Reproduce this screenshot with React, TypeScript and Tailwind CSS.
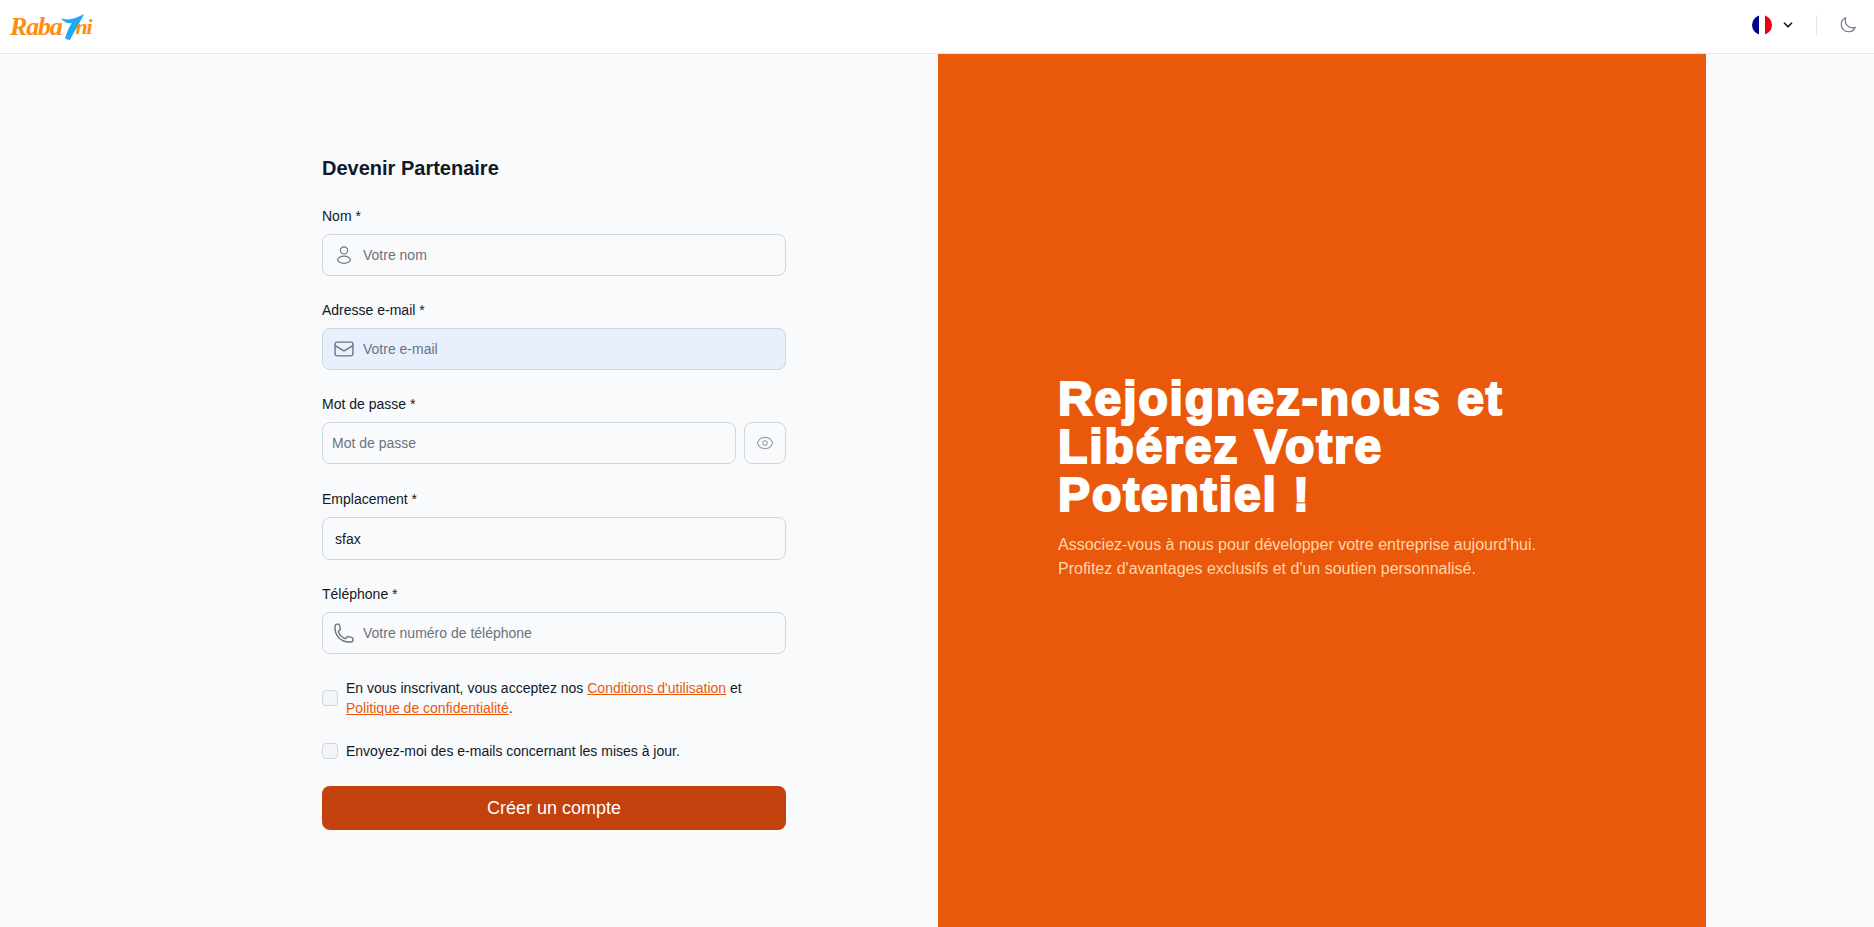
import { ChevronDown } from "lucide-react";
import { HiOutlineEnvelope, HiOutlineEye, HiOutlineMoon, HiOutlinePhone } from "react-icons/hi2";
import type { ReactNode } from "react";

const inputClass =
  "h-[42px] w-full rounded-lg border border-gray-300 bg-[#f9fafb] text-sm text-[#111827] outline-none placeholder:text-[#6b7280]";

function UserIcon() {
  return (
    <svg viewBox="0 0 14 18" fill="none" stroke="currentColor" strokeWidth="1.2" className="ml-[4px] h-[18px] w-[14px]">
      <circle cx="7" cy="4.4" r="3.6" />
      <ellipse cx="7" cy="13.8" rx="6.3" ry="3.6" />
    </svg>
  );
}

function Logo() {
  return (
    <div className="flex items-center font-['Liberation_Serif',serif] text-[26px] font-bold italic leading-none tracking-[-1.2px] text-[#ff8c0a]">
      <span>Raba</span>
      <svg viewBox="0 0 24 28" className="ml-[-2px] h-7 w-6">
        <path d="M1 5 C7 8 15 6 24 1 C21 8 15 17 10 27 C8 27 6 26 5 25 C7 19 9 14 12 10 C8 11 3 9 1 5 Z" fill="#1eaaf5" />
      </svg>
      <span className="ml-[-8px] text-[22px]">ni</span>
    </div>
  );
}

function Field({ label, className = "mb-[24px]", children }: { label: string; className?: string; children: ReactNode }) {
  return (
    <div className={className}>
      <label className="mb-2 block text-sm leading-[20px] text-[#111827]">{label}</label>
      {children}
    </div>
  );
}

function IconInput({ icon, placeholder, className = "" }: { icon: ReactNode; placeholder: string; className?: string }) {
  return (
    <div className="relative">
      <span className="absolute inset-y-0 left-[11px] flex items-center text-[#6b7280]">{icon}</span>
      <input placeholder={placeholder} className={`${inputClass} pl-10 pr-3 ${className}`} />
    </div>
  );
}

export default function App() {
  return (
    <div className="flex min-h-[927px] flex-col bg-[#f9fafb] font-['Liberation_Sans',Arial,sans-serif]">
      <header className="flex h-[54px] items-center justify-between border-b border-gray-200 bg-white pl-[10px] pr-[17px]">
        <Logo />
        <div className="flex items-center pb-1">
          <svg viewBox="0 0 20 20" className="size-5 rounded-full">
            <rect width="7" height="20" fill="#00008f" />
            <rect x="7" width="6" height="20" fill="#fff" />
            <rect x="13" width="7" height="20" fill="#e8000f" />
          </svg>
          <ChevronDown className="ml-[9px] size-[14px] text-[#111827]" strokeWidth={3} />
          <span className="ml-[21px] h-5 w-px bg-gray-200" />
          <HiOutlineMoon className="ml-[22px] size-[18px] text-[#6b7280]" />
        </div>
      </header>
      <main className="flex flex-1">
        <section className="w-[938px] pl-[322px] pt-[100px]">
          <div className="w-[464px]">
            <h1 className="mb-[24px] text-xl font-bold leading-[28px] text-[#111827]">Devenir Partenaire</h1>
            <Field label="Nom *">
              <IconInput icon={<UserIcon />} placeholder="Votre nom" />
            </Field>
            <Field label="Adresse e-mail *">
              <IconInput icon={<HiOutlineEnvelope className="size-[22px]" />} placeholder="Votre e-mail" className="!bg-[#e8f0fe]" />
            </Field>
            <Field label="Mot de passe *" className="mb-[25px]">
              <div className="flex gap-2">
                <input placeholder="Mot de passe" className={`${inputClass} pl-[9px] pr-2`} />
                <button className="grid h-[42px] w-[42px] shrink-0 place-items-center rounded-lg border border-gray-300 text-[#9ca3af]">
                  <HiOutlineEye className="size-[18px]" />
                </button>
              </div>
            </Field>
            <Field label="Emplacement *">
              <input defaultValue="sfax" className={`${inputClass} !h-[43px] px-3`} />
            </Field>
            <Field label="Téléphone *">
              <IconInput icon={<HiOutlinePhone className="size-[22px]" />} placeholder="Votre numéro de téléphone" />
            </Field>
            <div className="mb-[23px] flex items-center gap-2">
              <input type="checkbox" className="size-4 shrink-0 appearance-none rounded border border-gray-300 bg-gray-100" />
              <p className="text-sm leading-[20px] text-[#111827]">
                En vous inscrivant, vous acceptez nos{" "}
                <a className="text-[#ea580c] underline">Conditions d'utilisation</a> et{" "}
                <a className="text-[#ea580c] underline">Politique de confidentialité</a>.
              </p>
            </div>
            <div className="mb-[25px] flex items-center gap-2">
              <input type="checkbox" className="size-4 shrink-0 appearance-none rounded border border-gray-300 bg-gray-100" />
              <p className="text-sm leading-[20px] text-[#111827]">Envoyez-moi des e-mails concernant les mises à jour.</p>
            </div>
            <button className="h-[44px] w-full rounded-lg bg-[#c2410c] text-lg text-white">Créer un compte</button>
          </div>
        </section>
        <section className="flex w-[768px] flex-col justify-center bg-[#ea580c] pb-[25px] pl-[120px] pr-[120px]">
          <h2 className="mb-[14px] text-5xl font-bold leading-none tracking-[1.9px] text-white [-webkit-text-stroke:2.2px_white]">
            Rejoignez-nous et Libérez Votre Potentiel !
          </h2>
          <p className="text-base leading-[24px] text-[#fed7aa]">
            Associez-vous à nous pour développer votre entreprise aujourd'hui. Profitez d'avantages exclusifs et d'un soutien personnalisé.
          </p>
        </section>
      </main>
    </div>
  );
}
